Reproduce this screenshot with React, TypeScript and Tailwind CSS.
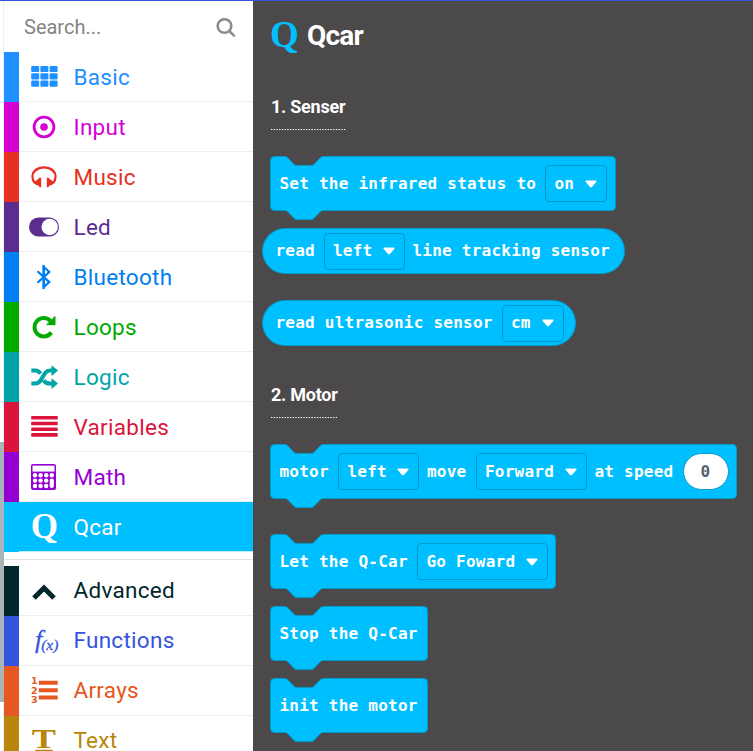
import type { ReactNode } from "react";

const serif = "font-['Liberation_Serif',serif]";

function GridIcon() {
  return (
    <svg width="27" height="21" viewBox="0 0 27 21" fill="currentColor">
      {[0, 7.3, 14.6].map((y) =>
        [0.2, 9.4, 18.6].map((x) => <rect key={`${x}-${y}`} x={x} y={y} width="8" height="6.1" rx="1.2" />),
      )}
    </svg>
  );
}

function DotCircleIcon() {
  return (
    <svg width="24" height="24" viewBox="0 0 24 24">
      <circle cx="12" cy="12" r="9.9" fill="none" stroke="currentColor" strokeWidth="2.8" />
      <circle cx="12" cy="12" r="3.8" fill="currentColor" />
    </svg>
  );
}

function HeadphonesIcon() {
  return (
    <svg width="26" height="22" viewBox="0 0 26 22" fill="currentColor">
      <path
        d="M3.600 16.800C.4 12 1 7 4.400 4.200C9 .4 17 .4 21.600 4.200C25 7 25.600 12 22.400 16.800"
        fill="none"
        stroke="currentColor"
        strokeWidth="2.4"
      />
      <path d="M10.200 11.800v9.500H8.400L7.800 19.500C5.400 19.400 3 18 2.600 16.200C5 15 7 13 8.600 11.800z" />
      <path d="M15.800 11.800v9.500h1.800l.6-1.800C20.600 19.400 23 18 23.400 16.200C21 15 19 13 17.400 11.800z" />
    </svg>
  );
}

function BluetoothIcon() {
  return (
    <svg width="16" height="26" viewBox="0 0 16 26" fill="none" stroke="currentColor" strokeWidth="2.2">
      <path d="M1.500 7.200l11.800 10.900L7.800 23V3l5.500 4.900L1.500 18.800" />
      <path d="M7.600 1v24" />
    </svg>
  );
}

function RepeatIcon() {
  return (
    <svg width="24" height="24" viewBox="0 0 24 24">
      <path d="M19.3 17.500A9.200 9.200 0 1 1 18.500 6" fill="none" stroke="currentColor" strokeWidth="4" />
      <path d="M23 1.500v8.200h-8.200z" fill="currentColor" stroke="currentColor" strokeLinejoin="round" />
    </svg>
  );
}

function ShuffleIcon() {
  return (
    <svg width="27" height="24" viewBox="0 0 27 24">
      <g fill="none" stroke="currentColor" strokeWidth="4">
        <path d="M.3 18.600h3.800c8.200 0 7-13 14.800-13H22" />
        <path d="M.3 5.600h3.800c2.600 0 4.200 1.300 5.300 3.200M12.700 15.200c1.200 2.200 3 3.400 6.200 3.400H22" />
      </g>
      <path
        d="M20.800.8v9.600L26.700 5.600zM20.800 13.800v9.600l5.900-4.800z"
        fill="currentColor"
        stroke="currentColor"
        strokeWidth=".6"
        strokeLinejoin="round"
      />
    </svg>
  );
}

function BarsIcon() {
  return (
    <svg width="27" height="21" viewBox="0 0 27 21" fill="currentColor">
      {[0, 5.7, 11.4, 17.1].map((y) => (
        <rect key={y} x="0.2" y={y} width="26.5" height="3.6" rx="0.6" />
      ))}
    </svg>
  );
}

function ToggleIcon() {
  return (
    <svg width="30" height="20" viewBox="0 0 30 20">
      <rect x="0" y="0.5" width="30" height="19" rx="9.5" fill="currentColor" />
      <circle cx="20.7" cy="10" r="8.2" fill="#fff" />
    </svg>
  );
}

function CalculatorIcon() {
  return (
    <svg width="25" height="26" viewBox="0 0 25 26" className="-ml-px">
      <rect x="0" y="0" width="25" height="26" rx="2" fill="currentColor" />
      <rect x="1.5" y="1.6" width="22" height="6" fill="#fff" />
      {[11.2, 16.6, 22].map((y) =>
        [4, 9.6, 15.2, 20.8].map((x) =>
          x > 20 && y > 16 ? null : <circle key={`${x}-${y}`} cx={x} cy={y} r="2.2" fill="#fff" />,
        ),
      )}
      <rect x="18.7" y="14.6" width="4.2" height="9.5" rx="2" fill="#fff" />
    </svg>
  );
}

function ChevronIcon() {
  return (
    <svg width="24" height="16" viewBox="0 0 24 16" className="mt-[3px]">
      <path d="M2 14L12 4l10 10" fill="none" stroke="currentColor" strokeWidth="5" />
    </svg>
  );
}

function ListIcon() {
  return (
    <svg width="27" height="27" viewBox="0 0 27 27" fill="currentColor" className="overflow-visible">
      <g fontFamily="DejaVu Sans, sans-serif" fontWeight="700" fontSize="9.5">
        <text x="0" y="7.4">1</text>
        <text x="0" y="16.7">2</text>
        <text x="0" y="26">3</text>
      </g>
      <path d="M7.8 3.7h18.9v4H7.8zM7.8 11.3h18.9v4H7.8zM7.8 18.6h18.9v4H7.8z" />
    </svg>
  );
}

function FunctionIcon() {
  return (
    <svg width="27" height="28" viewBox="0 0 27 28" fill="currentColor" className="overflow-visible">
      <g fontFamily="Liberation Serif, serif" fontStyle="italic" stroke="currentColor" strokeWidth=".3">
        <text x="4" y="21" fontSize="26">f</text>
        <text x="10.200" y="23" fontSize="15.500">(x)</text>
      </g>
    </svg>
  );
}

function TextIcon() {
  return (
    <svg width="24" height="26" viewBox="0 0 24 26" fill="currentColor" className="mt-[3px] overflow-visible">
      <text
        transform="translate(-.2 19.3) scale(1.34 1)"
        fontFamily="Liberation Serif, serif"
        fontWeight="700"
        fontSize="27"
      >
        T
      </text>
      <path d="M.5 24l3.500-3.200h16l3.500 3.200-3.500-1.200H4z" />
    </svg>
  );
}

function QIcon() {
  return <span className={`${serif} text-[35px] leading-[36px] font-bold`}>Q</span>;
}

type Item = { name: string; bar: string; text: string; icon: ReactNode; selected?: boolean };

const topItems: Item[] = [
  { name: "Basic", bar: "bg-[#1e90ff]", text: "text-[#1e90ff]", icon: <GridIcon /> },
  { name: "Input", bar: "bg-[#d400d4]", text: "text-[#d400d4]", icon: <DotCircleIcon /> },
  { name: "Music", bar: "bg-[#e63022]", text: "text-[#e63022]", icon: <HeadphonesIcon /> },
  { name: "Led", bar: "bg-[#5c2d91]", text: "text-[#5c2d91]", icon: <ToggleIcon /> },
  { name: "Bluetooth", bar: "bg-[#007ef4]", text: "text-[#007ef4]", icon: <BluetoothIcon /> },
  { name: "Loops", bar: "bg-[#00aa00]", text: "text-[#00aa00]", icon: <RepeatIcon /> },
  { name: "Logic", bar: "bg-[#00a4a6]", text: "text-[#00a4a6]", icon: <ShuffleIcon /> },
  { name: "Variables", bar: "bg-[#dc143c]", text: "text-[#dc143c]", icon: <BarsIcon /> },
  { name: "Math", bar: "bg-[#9400d3]", text: "text-[#9400d3]", icon: <CalculatorIcon /> },
  { name: "Qcar", bar: "bg-[#00bfff]", text: "text-white", icon: <QIcon />, selected: true },
];

const moreItems: Item[] = [
  { name: "Advanced", bar: "bg-[#00272b]", text: "text-[#00272b]", icon: <ChevronIcon /> },
  { name: "Functions", bar: "bg-[#3455db]", text: "text-[#3455db]", icon: <FunctionIcon /> },
  { name: "Arrays", bar: "bg-[#e65722]", text: "text-[#e65722]", icon: <ListIcon /> },
  { name: "Text", bar: "bg-[#b8860b]", text: "text-[#b8860b]", icon: <TextIcon /> },
];

function Row({ item, raised = false }: { item: Item; raised?: boolean }) {
  return (
    <div className="flex h-[50px] shrink-0">
      <div className={`w-[15px] ${item.bar}`} />
      <div
        className={`flex flex-1 items-center border-b pr-2 ${item.text} ${
          item.selected ? "border-[#bfeeff] bg-[#00bfff]" : "border-[#ecf0f1]"
        }`}
      >
        <div className="flex w-[50.5px] items-center justify-center">{item.icon}</div>
        <div className={`${raised ? "mb-px" : "mt-px"} ml-1 text-[22.5px] leading-[30px] tracking-[0.28px]`}>
          {item.name}
        </div>
      </div>
    </div>
  );
}

function Field({ width, children }: { width: string; children: ReactNode }) {
  return (
    <div
      className={`${width} flex h-[37px] shrink-0 items-center justify-between rounded-[4px] border border-[#0099cc] pr-[9px] pl-[8.5px]`}
    >
      <span>{children}</span>
      <svg width="12" height="8" viewBox="0 0 12 8">
        <path
          d="M1.2 1.3h9.6L6.6 6.2a.9.9 0 0 1-1.2 0z"
          fill="#fff"
          stroke="#fff"
          strokeWidth="1.6"
          strokeLinejoin="round"
        />
      </svg>
    </div>
  );
}

function Statement({ w, children }: { w: number; children: ReactNode }) {
  const r = w + 0.5;
  const d = `M.5 4.5a4 4 0 0 1 4-4H14c2 0 3 .6 4.4 2L23.2 7.6c1.2 1.3 2 1.9 3.8 1.9h14c1.8 0 2.6-.6 3.8-1.9L49.6 2.5C51 1.1 52 .5 54 .5H${r - 4}a4 4 0 0 1 4 4v46a4 4 0 0 1-4 4H54c-2 0-3 .6-4.4 2L44.8 61.6c-1.2 1.3-2 1.9-3.8 1.9H27c-1.8 0-2.6-.6-3.8-1.9L18.4 56.5C17 55.1 16 54.5 14 54.5H4.5a4 4 0 0 1-4-4z`;
  return (
    <div className="grid h-[72px] shrink-0">
      <svg className="col-start-1 row-start-1" width={w + 1} height="64">
        <path d={d} fill="#00bfff" stroke="#0099cc" />
      </svg>
      <div className="z-10 col-start-1 row-start-1 flex h-[55px] items-center pl-[9.5px]">{children}</div>
    </div>
  );
}

function Reporter({ width, children }: { width: string; children: ReactNode }) {
  return (
    <div
      className={`${width} -ml-[8.5px] flex h-[46px] shrink-0 items-center rounded-full border border-[#0099cc] bg-[#00bfff] pl-[13px]`}
    >
      {children}
    </div>
  );
}

function Label({ width, children }: { width: string; children: ReactNode }) {
  return <div className={`${width} shrink-0`}>{children}</div>;
}

function Heading({ width, children }: { width: string; children: ReactNode }) {
  return (
    <div className={`${width} h-[34px] text-[18px] leading-[24px] font-bold tracking-[-0.25px] whitespace-nowrap`}>
      {children}
      <svg className="mt-[10px] block" width="100%" height="1">
        <path d="M0 .5H400" stroke="#fff" strokeDasharray="1.35 1.35" />
      </svg>
    </div>
  );
}

const stack =
  "flex flex-col font-['DejaVu_Sans_Mono',monospace] text-[16px] leading-[20px] font-bold tracking-[0.24px] whitespace-pre";

export default function App() {
  return (
    <div className="flex h-[751px] w-[753px] flex-col overflow-hidden bg-white font-['Roboto',sans-serif]">
      <div className="h-px shrink-0 bg-[#3455db]" />
      <div className="flex min-h-0 flex-1">
        <div className="w-[4px] shrink-0 border-r border-[#ecf0f1]">
          <div className="mt-[441px] h-[260px] w-[4px] bg-[#a8b4b8]" />
        </div>
        <div className="flex w-[249px] shrink-0 flex-col overflow-hidden bg-white">
          <div className="flex h-[51px] shrink-0 items-center justify-between pr-[17px] pl-5 text-[#848484]">
            <span className="text-[20px]">Search...</span>
            <svg
              width="20"
              height="20"
              viewBox="0 0 20 20"
              fill="none"
              stroke="#8c8c8c"
              strokeWidth="2.6"
              className="mt-[3px]"
            >
              <circle cx="8.5" cy="8" r="6.8" />
              <path d="M13.3 13l4.7 4.6" strokeLinecap="round" />
            </svg>
          </div>
          {topItems.map((i) => (
            <Row key={i.name} item={i} />
          ))}
          <div className="h-[14px] shrink-0 pt-[7px]">
            <div className="h-px bg-[#dfe2e3]" />
          </div>
          {moreItems.map((i) => (
            <Row key={i.name} item={i} raised />
          ))}
        </div>
        <div className="flex flex-1 flex-col overflow-hidden bg-[#4b4949] pl-[17px] text-white">
          <div className="mt-[15px] flex h-[40px] shrink-0 items-center">
            <span className={`${serif} mb-[3px] w-[37px] text-[37px] leading-[40px] font-bold text-[#00bfff]`}>Q</span>
            <span className="text-[28px] leading-[40px] font-bold tracking-[-0.8px]">Qcar</span>
          </div>
          <div className="mt-[39px] pl-px">
            <Heading width="w-[75px]">1. Senser</Heading>
          </div>
          <div className={`mt-[27px] ${stack}`}>
            <Statement w={345}>
              <Label width="w-[265.5px]">Set the infrared status to</Label>
              <Field width="w-[62px]">on</Field>
            </Statement>
            <Reporter width="w-[363px]">
              <Label width="w-[48px]">read</Label>
              <Field width="w-[81px]">left</Field>
              <Label width="ml-[8px]">line tracking sensor</Label>
            </Reporter>
            <div className="h-[26px]" />
            <Reporter width="w-[314px]">
              <Label width="w-[226px]">read ultrasonic sensor</Label>
              <Field width="w-[62px]">cm</Field>
            </Reporter>
          </div>
          <div className="mt-[37px] pl-px">
            <Heading width="w-[66px]">2. Motor</Heading>
          </div>
          <div className={`mt-[27px] ${stack}`}>
            <Statement w={466}>
              <Label width="w-[58.5px]">motor</Label>
              <Field width="w-[81px]">left</Field>
              <Label width="w-[56.5px] pl-[8px]">move</Label>
              <Field width="w-[111px]">Forward</Field>
              <Label width="w-[96px] pl-[8px]">at speed</Label>
              <div className="flex h-[37px] w-[46px] items-center justify-center rounded-full border border-[#0099cc] bg-white text-[#575e75]">
                0
              </div>
            </Statement>
            <div className="h-[18px]" />
            <Statement w={285}>
              <Label width="w-[137.5px]">Let the Q-Car</Label>
              <Field width="w-[131px]">Go Foward</Field>
            </Statement>
            <Statement w={157}>
              <Label width="w-[140px]">Stop the Q-Car</Label>
            </Statement>
            <Statement w={157}>
              <Label width="w-[140px]">init the motor</Label>
            </Statement>
          </div>
        </div>
      </div>
    </div>
  );
}
